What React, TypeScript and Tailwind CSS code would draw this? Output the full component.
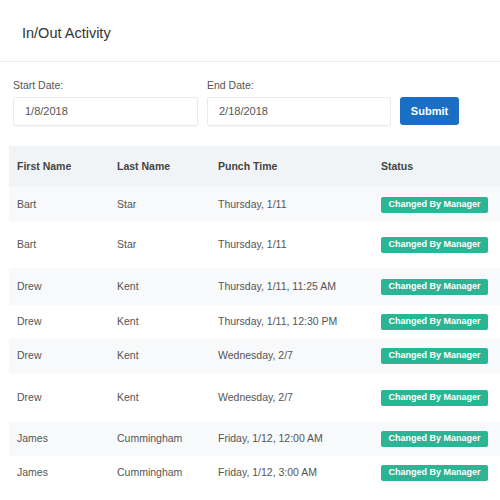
import React from "react";

const rows = [
  { f: "Bart", l: "Star", p: "Thursday, 1/11", h: "h-[35px]", g: true },
  { f: "Bart", l: "Star", p: "Thursday, 1/11", h: "h-[46px]", g: false },
  { f: "Drew", l: "Kent", p: "Thursday, 1/11, 11:25 AM", h: "h-[37px]", g: true },
  { f: "Drew", l: "Kent", p: "Thursday, 1/11, 12:30 PM", h: "h-[34px]", g: false },
  { f: "Drew", l: "Kent", p: "Wednesday, 2/7", h: "h-[34px]", g: true },
  { f: "Drew", l: "Kent", p: "Wednesday, 2/7", h: "h-[49px]", g: false },
  { f: "James", l: "Cummingham", p: "Friday, 1/12, 12:00 AM", h: "h-[34px]", g: true },
  { f: "James", l: "Cummingham", p: "Friday, 1/12, 3:00 AM", h: "h-[34px]", g: false },
];

export default function App() {
  return (
    <div className="w-[500px] h-[500px] overflow-hidden bg-white text-[#555]" style={{ fontFamily: '"Liberation Sans", Arial, sans-serif' }}>
      <div className="h-[62px] border-b border-[#ececec] flex items-center pl-[22px] pt-[6px]">
        <span className="text-[14.5px] text-[#333] font-medium">In/Out Activity</span>
      </div>
      <div className="flex items-end pl-[13px] pt-[17px]">
        <div className="flex flex-col w-[185px]">
          <span className="text-[10.5px] leading-[12px] mb-[6px]">Start Date:</span>
          <div className="h-[29px] border border-[#ebebeb] rounded-[2px] flex items-center pl-[11px] text-[11px] shadow-[0_1px_1px_rgba(0,0,0,0.03)]">1/8/2018</div>
        </div>
        <div className="flex flex-col w-[184px] ml-[9px]">
          <span className="text-[10.5px] leading-[12px] mb-[6px]">End Date:</span>
          <div className="h-[29px] border border-[#ebebeb] rounded-[2px] flex items-center pl-[11px] text-[11px] shadow-[0_1px_1px_rgba(0,0,0,0.03)]">2/18/2018</div>
        </div>
        <button className="ml-[9px] w-[59px] h-[28px] mb-[1px] rounded-[3px] bg-[#1a6ec4] text-white text-[11px] font-bold flex items-center justify-center">Submit</button>
      </div>
      <div className="ml-[9px] mt-[20px]">
        <div className="h-[41px] bg-[#f1f4f6] flex items-center text-[10.5px] font-bold text-[#444]">
          <div className="w-[108px] pl-[8px]">First Name</div>
          <div className="w-[101px]">Last Name</div>
          <div className="w-[163px]">Punch Time</div>
          <div>Status</div>
        </div>
        {rows.map((r, i) => (
          <div key={i} className={`${r.h} flex items-center text-[10.5px] ${r.g ? "bg-[#f8f9fa]" : "bg-white"}`}>
            <div className="w-[108px] pl-[8px]">{r.f}</div>
            <div className="w-[101px]">{r.l}</div>
            <div className="w-[163px]">{r.p}</div>
            <div className="w-[107px] h-[16px] rounded-[2px] bg-[#2bb594] text-white text-[9px] font-bold flex items-center justify-center">Changed By Manager</div>
          </div>
        ))}
      </div>
    </div>
  );
}
